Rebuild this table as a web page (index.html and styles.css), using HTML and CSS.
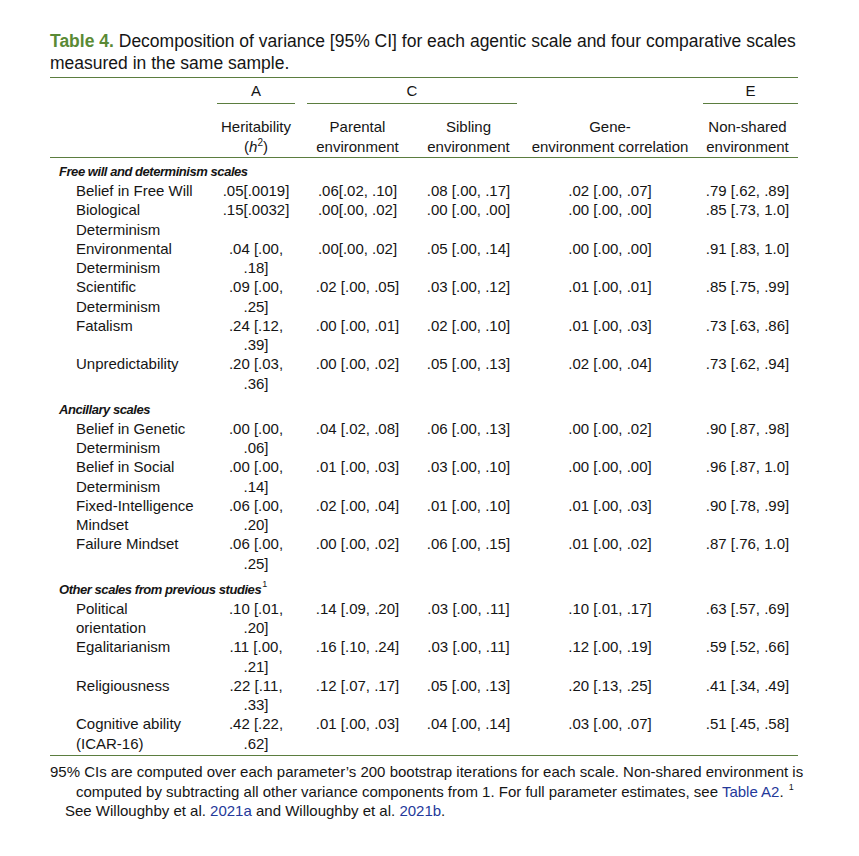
FILE: index.html
```html
<!DOCTYPE html>
<html lang="en">
<head>
<meta charset="utf-8">
<title>Table 4</title>
<link rel="stylesheet" href="styles.css">
</head>
<body>
<div class="page">
  <p class="title"><span class="tlabel">Table 4.</span> <span class="tline">Decomposition of variance [95% CI] for each agentic scale and four comparative scales</span><br><span class="tline">measured in the same sample.</span></p>
  <table class="data">
    <colgroup>
      <col class="c-label"><col class="c-a"><col class="c-par"><col class="c-sib"><col class="c-gene"><col class="c-ns">
    </colgroup>
    <thead>
      <tr class="grp-row">
        <th></th>
        <th><div class="grp">A</div></th>
        <th colspan="2"><div class="grp">C</div></th>
        <th></th>
        <th class="last"><div class="grp grp-e">E</div></th>
      </tr>
      <tr class="head-row">
        <th></th>
        <th>Heritability<br>(<i>h</i><sup>2</sup>)</th>
        <th>Parental<br>environment</th>
        <th>Sibling<br>environment</th>
        <th>Gene-<br>environment correlation</th>
        <th class="last">Non-shared<br>environment</th>
      </tr>
    </thead>
    <tbody>
      <tr class="section first"><td colspan="6">Free will and determinism scales</td></tr>
      <tr><td class="lbl">Belief in Free Will</td><td>.05[.0019]</td><td>.06[.02, .10]</td><td>.08 [.00, .17]</td><td>.02 [.00, .07]</td><td class="last">.79 [.62, .89]</td></tr>
      <tr><td class="lbl">Biological<br>Determinism</td><td>.15[.0032]</td><td>.00[.00, .02]</td><td>.00 [.00, .00]</td><td>.00 [.00, .00]</td><td class="last">.85 [.73, 1.0]</td></tr>
      <tr><td class="lbl">Environmental<br>Determinism</td><td>.04 [.00,<br>.18]</td><td>.00[.00, .02]</td><td>.05 [.00, .14]</td><td>.00 [.00, .00]</td><td class="last">.91 [.83, 1.0]</td></tr>
      <tr><td class="lbl">Scientific<br>Determinism</td><td>.09 [.00,<br>.25]</td><td>.02 [.00, .05]</td><td>.03 [.00, .12]</td><td>.01 [.00, .01]</td><td class="last">.85 [.75, .99]</td></tr>
      <tr><td class="lbl">Fatalism</td><td>.24 [.12,<br>.39]</td><td>.00 [.00, .01]</td><td>.02 [.00, .10]</td><td>.01 [.00, .03]</td><td class="last">.73 [.63, .86]</td></tr>
      <tr><td class="lbl">Unpredictability</td><td>.20 [.03,<br>.36]</td><td>.00 [.00, .02]</td><td>.05 [.00, .13]</td><td>.02 [.00, .04]</td><td class="last">.73 [.62, .94]</td></tr>

      <tr class="section"><td colspan="6">Ancillary scales</td></tr>
      <tr><td class="lbl">Belief in Genetic<br>Determinism</td><td>.00 [.00,<br>.06]</td><td>.04 [.02, .08]</td><td>.06 [.00, .13]</td><td>.00 [.00, .02]</td><td class="last">.90 [.87, .98]</td></tr>
      <tr><td class="lbl">Belief in Social<br>Determinism</td><td>.00 [.00,<br>.14]</td><td>.01 [.00, .03]</td><td>.03 [.00, .10]</td><td>.00 [.00, .00]</td><td class="last">.96 [.87, 1.0]</td></tr>
      <tr><td class="lbl">Fixed-Intelligence<br>Mindset</td><td>.06 [.00,<br>.20]</td><td>.02 [.00, .04]</td><td>.01 [.00, .10]</td><td>.01 [.00, .03]</td><td class="last">.90 [.78, .99]</td></tr>
      <tr><td class="lbl">Failure Mindset</td><td>.06 [.00,<br>.25]</td><td>.00 [.00, .02]</td><td>.06 [.00, .15]</td><td>.01 [.00, .02]</td><td class="last">.87 [.76, 1.0]</td></tr>

      <tr class="section"><td colspan="6">Other scales from previous studies<sup class="fn">1</sup></td></tr>
      <tr><td class="lbl">Political<br>orientation</td><td>.10 [.01,<br>.20]</td><td>.14 [.09, .20]</td><td>.03 [.00, .11]</td><td>.10 [.01, .17]</td><td class="last">.63 [.57, .69]</td></tr>
      <tr><td class="lbl">Egalitarianism</td><td>.11 [.00,<br>.21]</td><td>.16 [.10, .24]</td><td>.03 [.00, .11]</td><td>.12 [.00, .19]</td><td class="last">.59 [.52, .66]</td></tr>
      <tr><td class="lbl">Religiousness</td><td>.22 [.11,<br>.33]</td><td>.12 [.07, .17]</td><td>.05 [.00, .13]</td><td>.20 [.13, .25]</td><td class="last">.41 [.34, .49]</td></tr>
      <tr class="final"><td class="lbl">Cognitive ability<br>(ICAR-16)</td><td>.42 [.22,<br>.62]</td><td>.01 [.00, .03]</td><td>.04 [.00, .14]</td><td>.03 [.00, .07]</td><td class="last">.51 [.45, .58]</td></tr>
    </tbody>
  </table>
  <div class="note">
    <div class="n1">95% CIs are computed over each parameter’s 200 bootstrap iterations for each scale. Non-shared environment is</div>
    <div class="n2">computed by subtracting all other variance components from 1. For full parameter estimates, see <span class="ref">Table A2</span>. <sup class="fn">1</sup></div>
    <div class="n3">See Willoughby et al. <span class="ref">2021a</span> and Willoughby et al. <span class="ref">2021b</span>.</div>
  </div>
</div>
</body>
</html>
```

FILE: styles.css
```css
body {
  margin: 0;
  background: #ffffff;
  color: #151515;
  font-family: "Liberation Sans", Arial, sans-serif;
}

.page {
  width: 748px;
  padding: 30px 0 0 50px;
}

.title {
  margin: 0 0 3px;
  font-size: 17.5px;
  line-height: 22px;
  white-space: nowrap;
}

.tlabel {
  color: #5a8a35;
  font-weight: bold;
}

table.data {
  width: 748px;
  table-layout: fixed;
  border-collapse: collapse;
  font-size: 15px;
  line-height: 19.25px;
  border-top: 1px solid #5b7d3f;
  border-bottom: 1px solid #5b7d3f;
}

.c-label { width: 161px; }
.c-a { width: 90px; }
.c-par { width: 113px; }
.c-sib { width: 109px; }
.c-gene { width: 174px; }
.c-ns { width: 101px; }

th, td {
  padding: 0 6px;
  font-weight: normal;
  text-align: center;
  vertical-align: top;
  white-space: nowrap;
}

.grp-row th {
  padding-top: 3px;
}

.grp {
  padding-bottom: 3px;
  border-bottom: 1px solid #5b7d3f;
}

.grp-e {
  margin-right: -6px;
}

.head-row th {
  padding-top: 13px;
  padding-bottom: 1.5px;
  vertical-align: bottom;
  border-bottom: 1px solid #5b7d3f;
}

.head-row sup {
  font-size: 10px;
  line-height: 0;
  vertical-align: 6px;
}

td.lbl {
  text-align: left;
  padding-left: 26px;
}

.section td {
  text-align: left;
  padding-left: 9px;
  padding-top: 6.75px;
  font-weight: bold;
  font-style: italic;
  font-size: 13px;
  letter-spacing: -0.45px;
}

.section.first td {
  padding-top: 3.5px;
}

sup.fn {
  font-size: 9px;
  line-height: 0;
  vertical-align: 7px;
  font-weight: normal;
  font-style: normal;
  letter-spacing: 0;
  margin-left: 1px;
}

.final td {
  padding-bottom: 2.5px;
}

.note {
  margin-top: 6px;
  font-size: 15px;
  line-height: 19.3px;
  white-space: nowrap;
}

.n2 { padding-left: 26px; }
.n3 { padding-left: 15px; }

.ref {
  color: #24399a;
}
```
